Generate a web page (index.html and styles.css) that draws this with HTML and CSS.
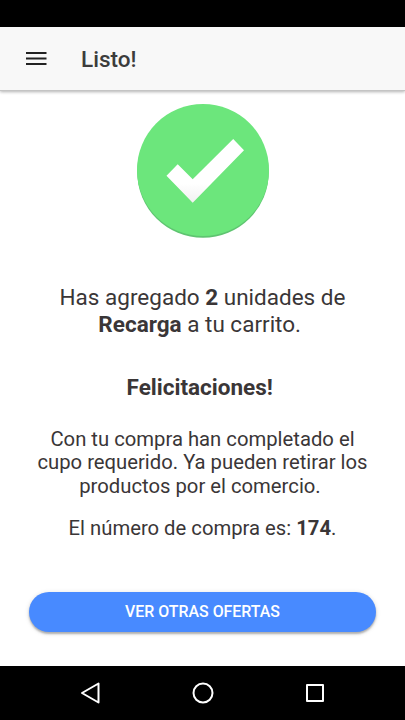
FILE: index.html
```html
<!DOCTYPE html>
<html lang="es">
<head>
<meta charset="utf-8">
<title>Listo!</title>
<link rel="stylesheet" href="styles.css">
</head>
<body>
<div class="status"></div>
<header class="toolbar">
  <svg class="menu" viewBox="0 0 22 15"><path d="M0 2h20.500M0 7.500h20.500M0 13h20.500" stroke="#222" stroke-width="2"/></svg>
  <h1>Listo!</h1>
</header>
<main>
  <svg class="check" viewBox="0 0 134 136">
    <defs>
      <linearGradient id="mark" x1="0" y1="0" x2="0" y2="1"><stop offset=".7" stop-color="#fff"/><stop offset="1" stop-color="#f1f1f1"/></linearGradient>
    </defs>
    <circle cx="67" cy="69" r="65.800" fill="#5fc471"/>
    <circle cx="67" cy="67" r="66" fill="#6ce67c"/>
    <path d="M30.500 72.700l11.200-11.500 15 15L97.200 36 108 47.200 56.700 99.700z" fill="url(#mark)"/>
  </svg>
  <p class="added">Has agregado <b>2</b> unidades de<br><b>Recarga</b> a tu carrito.&nbsp;</p>
  <h2>Felicitaciones!&nbsp;</h2>
  <p class="info">Con tu compra han completado el<br>cupo requerido. Ya pueden retirar los<br>productos por el comercio.&nbsp;</p>
  <p class="number">El número de compra es: <b>174</b>.</p>
  <button>VER OTRAS OFERTAS</button>
</main>
<nav>
  <svg viewBox="0 0 24 24"><path d="M19.500 2.500v19L3 12z"/></svg>
  <svg viewBox="0 0 24 24"><circle cx="12" cy="12" r="9.500"/></svg>
  <svg viewBox="0 0 24 24"><path d="M4 4h16v16H4z"/></svg>
</nav>
</body>
</html>
```
FILE: styles.css
```css
* { box-sizing: border-box; }
body { margin: 0; height: 720px; display: flex; flex-direction: column; background: #fff; color: #3a3637; font-family: Roboto, sans-serif; overflow: hidden; }
.status { height: 27px; background: #000; }
.toolbar { height: 63px; display: flex; align-items: center; padding-left: 26px; background: #f8f8f8; box-shadow: 0 1px 0 #c4c4c4, 0 2px 3px rgba(0,0,0,.3); }
.menu { width: 22px; height: 15px; }
h1 { margin: 0 0 0 33px; color: #3c3c3c; font-size: 22.500px; font-weight: 500; line-height: 28px; }
main { flex: 1; display: flex; flex-direction: column; align-items: center; text-align: center; }
.check { width: 134px; height: 136px; margin-top: 13px; }
p, h2 { margin: 0; white-space: nowrap; }
.added { margin-top: 45px; font-size: 22.500px; line-height: 27px; }
h2 { margin-top: 36px; font-size: 22.500px; line-height: 27px; }
.info { margin-top: 26.500px; font-size: 20.250px; line-height: 23.600px; }
.number { margin-top: 17.700px; font-size: 20.250px; line-height: 24px; }
button { width: 347px; height: 40px; margin-top: 52px; padding: 0; border: 0; border-radius: 20px; background: #488aff; color: #fff; font: 500 15.900px Roboto, sans-serif; box-shadow: 0 2px 2px rgba(0,0,0,.25), 0 1px 5px rgba(0,0,0,.15); }
nav { height: 54px; display: flex; justify-content: center; align-items: center; gap: 88px; background: #000; }
nav svg { width: 24px; height: 24px; fill: none; stroke: #fff; stroke-width: 2; stroke-linejoin: round; }
```
